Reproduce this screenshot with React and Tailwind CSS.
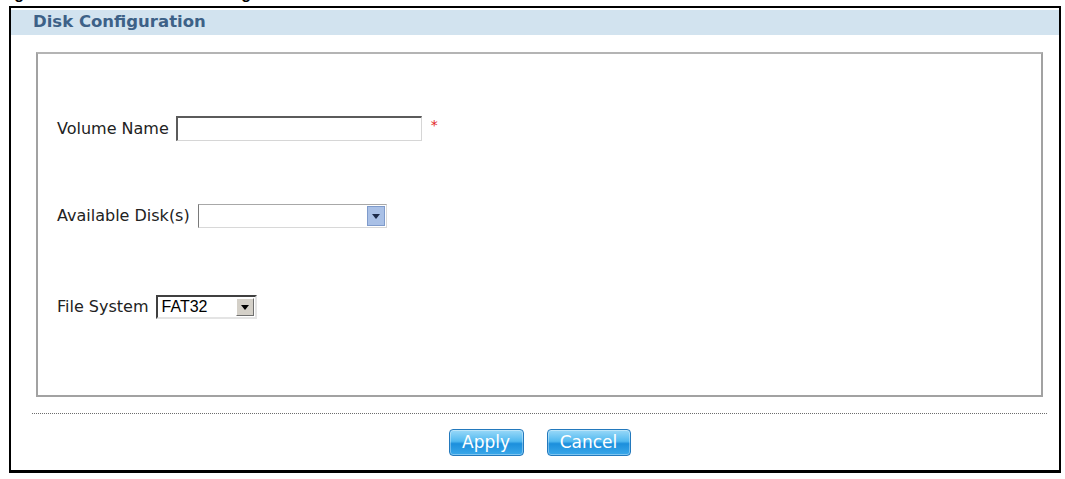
import React from 'react';

const sans = { fontFamily: '"DejaVu Sans", Verdana, sans-serif' };

const DropArrow = ({ color = '#1f2a44' }) => (
  <svg width="8" height="5" viewBox="0 0 8 5">
    <path d="M0 0h8L4 5z" fill={color} />
  </svg>
);

export default function App() {
  return (
    <div className="w-[1065px] h-[479px] bg-white overflow-hidden text-[#222]" style={sans}>
      {/* caption cut off above the frame */}
      <div className="h-[6px] overflow-hidden">
        <div className="flex mt-[-14px] leading-[16px] text-[16px] font-bold text-black font-['Liberation_Sans',Arial,sans-serif]">
          <span>Figure 6</span>
          <span className="ml-[100px]">Disk Configuration</span>
        </div>
      </div>

      <div className="ml-[9px] w-[1052px] h-[467px] border-2 border-b-[3px] border-black">
        <div className="mt-[2px] h-[25px] bg-[#d2e3ef] flex items-center pl-[22px]">
          <span className="text-[16.5px] font-bold text-[#3d6187] leading-none">Disk Configuration</span>
        </div>

        {/* form box */}
        <div className="ml-[25px] mt-[17px] w-[1007px] h-[345px] border-2 border-[#a2a2a2] border-t-[#b4b4b4]">
          <div className="flex flex-col pl-[19px] text-[16px]">
            <div className="mt-[62px] h-[25px] flex items-center">
              <span>Volume Name</span>
              <div className="ml-[7px] w-[246px] h-[25px] border-t-2 border-l-2 border-r border-b border-t-[#5b5b5b] border-l-[#5b5b5b] border-r-[#d6d6d6] border-b-[#d6d6d6] bg-white" />
              <span className="ml-[9px] -mt-[6px] text-[#e32626] text-[14px]">*</span>
            </div>

            <div className="mt-[63px] h-[24px] flex items-center">
              <span>Available Disk(s)</span>
              <div className="ml-[8px] w-[189px] h-[24px] border border-t-[#a8a8a8] border-l-[#7a7a7a] border-r-[#d8d8d8] border-b-[#d8d8d8] bg-white flex items-center justify-end pr-[1px]">
                <div className="w-[18px] h-[20px] bg-[#a9c0e6] border border-[#7f9bcb] flex items-center justify-center">
                  <DropArrow color="#1d2b4a" />
                </div>
              </div>
            </div>

            <div className="mt-[67px] h-[24px] flex items-center">
              <span>File System</span>
              <div className="ml-[7px] w-[101px] h-[24px] border-2 border-t-[#404040] border-l-[#404040] border-r-[#e4e4e4] border-b-[#e4e4e4] bg-white flex items-center justify-between pl-[4px] pr-[1px]">
                <span className="text-[16px] leading-none font-['Liberation_Sans',Arial,sans-serif] text-black">FAT32</span>
                <div className="w-[18px] h-[18px] bg-[#d4d0c8] border border-t-white border-l-white border-r-[#6f6f6f] border-b-[#6f6f6f] flex items-center justify-center">
                  <DropArrow color="#000" />
                </div>
              </div>
            </div>
          </div>
        </div>

        <div className="ml-[21px] mt-[16px] w-[1015px] border-t border-dotted border-[#6d6d6d]" />

        <div className="mt-[15px] flex justify-center pl-[9px] gap-[23px]">
          <button className="w-[75px] h-[27px] rounded-[4px] border border-[#2379bd] bg-[linear-gradient(to_bottom,#9ad9f8_0%,#52b9f0_45%,#1c8fdc_55%,#3aa8ea_100%)] text-white text-[17px] leading-none shadow-[inset_0_0_0_1px_rgba(255,255,255,0.35)]">
            Apply
          </button>
          <button className="w-[84px] h-[27px] rounded-[4px] border border-[#2379bd] bg-[linear-gradient(to_bottom,#9ad9f8_0%,#52b9f0_45%,#1c8fdc_55%,#3aa8ea_100%)] text-white text-[17px] leading-none shadow-[inset_0_0_0_1px_rgba(255,255,255,0.35)]">
            Cancel
          </button>
        </div>
      </div>
    </div>
  );
}
